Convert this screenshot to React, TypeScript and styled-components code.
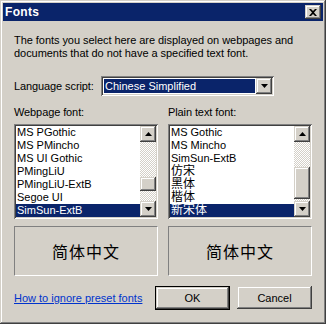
import React from 'react';
import styled, { createGlobalStyle } from 'styled-components';

const GlobalStyle = createGlobalStyle`
  html, body {
    margin: 0;
    padding: 0;
    background: #d4d0c8;
  }
  body {
    font-family: 'Liberation Sans', Arial, sans-serif;
    font-size: 11px;
    color: #000;
  }
`;

const raised = `
  box-shadow: inset -1px -1px #404040, inset 1px 1px #d4d0c8,
    inset -2px -2px #808080, inset 2px 2px #ffffff;
`;

const sunken = `
  box-shadow: inset 1px 1px #808080, inset -1px -1px #ffffff,
    inset 2px 2px #404040, inset -2px -2px #d4d0c8;
`;

const webFonts = [
  'MS PGothic',
  'MS PMincho',
  'MS UI Gothic',
  'PMingLiU',
  'PMingLiU-ExtB',
  'Segoe UI',
  'SimSun-ExtB'
];

const plainFonts = ['MS Gothic', 'MS Mincho', 'SimSun-ExtB', '仿宋', '黑体', '楷体', '新宋体'];

function ArrowGlyph({ up }: { up?: boolean }) {
  return (
    <svg width="7" height="4" viewBox="0 0 7 4">
      {up ? <path d="M3.5 0 L7 4 L0 4 Z" fill="#000" /> : <path d="M0 0 L7 0 L3.5 4 Z" fill="#000" />}
    </svg>
  );
}

function FontList({ items, thumbTop, thumbHeight }: { items: string[]; thumbTop: number; thumbHeight: number }) {
  return (
    <ListBox>
      <ListItems>
        {items.map((name, index) => (
          <ListRow key={name} selected={index === items.length - 1} cjk={/[^\x00-\x7f]/.test(name)}>
            {name}
          </ListRow>
        ))}
      </ListItems>
      <ScrollBar>
        <ScrollButton>
          <ArrowGlyph up />
        </ScrollButton>
        <Track>
          <Thumb style={{ marginTop: thumbTop, height: thumbHeight }} />
        </Track>
        <ScrollButton>
          <ArrowGlyph />
        </ScrollButton>
      </ScrollBar>
    </ListBox>
  );
}

export default function App() {
  return (
    <>
      <GlobalStyle />
      <Window>
        <TitleBar>
          <Title>Fonts</Title>
          <CloseButton>
            <svg width="8" height="7" viewBox="0 0 8 7">
              <path d="M0 0 L2 0 L4 2 L6 0 L8 0 L5 3.5 L8 7 L6 7 L4 5 L2 7 L0 7 L3 3.5 Z" fill="#000" />
            </svg>
          </CloseButton>
        </TitleBar>
        <Body>
          <Intro>
            The fonts you select here are displayed on webpages and
            <br />
            documents that do not have a specified text font.
          </Intro>
          <ScriptRow>
            <Label>Language script:</Label>
            <Select>
              <SelectValue>Chinese Simplified</SelectValue>
              <DropButton>
                <ArrowGlyph />
              </DropButton>
            </Select>
          </ScriptRow>
          <Columns>
            <Column>
              <Label>Webpage font:</Label>
              <FontList items={webFonts} thumbTop={35} thumbHeight={14} />
              <Preview>简体中文</Preview>
            </Column>
            <Column>
              <Label>Plain text font:</Label>
              <FontList items={plainFonts} thumbTop={25} thumbHeight={32} />
              <Preview>简体中文</Preview>
            </Column>
          </Columns>
          <Footer>
            <HelpLink href="#">How to ignore preset fonts</HelpLink>
            <Buttons>
              <DefaultButton>
                <Button>OK</Button>
              </DefaultButton>
              <Button>Cancel</Button>
            </Buttons>
          </Footer>
        </Body>
      </Window>
    </>
  );
}

const Window = styled.div`
  width: 326px;
  height: 324px;
  box-sizing: border-box;
  padding: 3px;
  background: #d4d0c8;
  display: flex;
  flex-direction: column;
  box-shadow: inset -1px -1px #404040, inset 1px 1px #d4d0c8,
    inset -2px -2px #808080, inset 2px 2px #ffffff;
`;

const TitleBar = styled.div`
  height: 18px;
  background: #0a246a;
  display: flex;
  align-items: center;
  justify-content: space-between;
  padding: 0 2px 0 2px;
`;

const Title = styled.span`
  color: #fff;
  font-weight: bold;
  font-size: 12px;
  letter-spacing: 0.3px;
`;

const CloseButton = styled.div`
  width: 16px;
  height: 14px;
  background: #d4d0c8;
  display: flex;
  align-items: center;
  justify-content: center;
  ${raised}
`;

const Body = styled.div`
  padding: 0 11px;
  display: flex;
  flex-direction: column;
`;

const Intro = styled.p`
  margin: 13px 0 0;
  line-height: 13px;
  letter-spacing: -0.05px;
`;

const ScriptRow = styled.div`
  display: flex;
  align-items: center;
  margin-top: 16px;
  height: 20px;
`;

const Label = styled.div`
  line-height: 13px;
  width: 87px;
  white-space: nowrap;
  letter-spacing: -0.1px;
`;

const Select = styled.div`
  width: 173px;
  height: 20px;
  box-sizing: border-box;
  padding: 2px;
  background: #fff;
  display: flex;
  align-items: stretch;
  ${sunken}
`;

const SelectValue = styled.div`
  flex: 1;
  margin: 1px;
  padding-left: 1px;
  background: #0a246a;
  color: #fff;
  font-size: 11px;
  line-height: 14px;
`;

const DropButton = styled.div`
  width: 16px;
  background: #d4d0c8;
  display: flex;
  align-items: center;
  justify-content: center;
  ${raised}
`;

const Columns = styled.div`
  display: grid;
  grid-template-columns: 144px 144px;
  column-gap: 10px;
  margin-top: 10px;
`;

const Column = styled.div`
  display: flex;
  flex-direction: column;
`;

const ListBox = styled.div`
  margin-top: 5px;
  height: 95px;
  box-sizing: border-box;
  padding: 2px;
  background: #fff;
  display: flex;
  ${sunken}
`;

const ListItems = styled.div`
  flex: 1;
  display: flex;
  flex-direction: column;
  overflow: hidden;
`;

const ListRow = styled.div<{ selected?: boolean; cjk?: boolean }>`
  height: 13px;
  line-height: 13px;
  padding-left: 1px;
  font-size: ${(p) => (p.cjk ? '12px' : '11px')};
  font-family: 'Liberation Sans', 'Noto Sans CJK SC', sans-serif;
  white-space: nowrap;
  background: ${(p) => (p.selected ? '#0a246a' : 'transparent')};
  color: ${(p) => (p.selected ? '#fff' : '#000')};
`;

const ScrollBar = styled.div`
  width: 16px;
  display: flex;
  flex-direction: column;
`;

const ScrollButton = styled.div`
  height: 16px;
  background: #d4d0c8;
  display: flex;
  align-items: center;
  justify-content: center;
  ${raised}
`;

const Track = styled.div`
  flex: 1;
  background-image: conic-gradient(#d4d0c8 25%, #fff 0 50%, #d4d0c8 0 75%, #fff 0);
  background-size: 2px 2px;
`;

const Thumb = styled.div`
  background: #d4d0c8;
  ${raised}
`;

const Preview = styled.div`
  margin-top: 7px;
  height: 50px;
  box-sizing: border-box;
  border: 1px solid;
  border-color: #808080 #fff #fff #808080;
  display: flex;
  align-items: center;
  justify-content: center;
  font-family: 'Noto Sans CJK SC', sans-serif;
  font-size: 16px;
  letter-spacing: 1px;
`;

const Footer = styled.div`
  display: flex;
  align-items: center;
  justify-content: space-between;
  margin-top: 10px;
`;

const HelpLink = styled.a`
  color: #0033cc;
  text-decoration: underline;
`;

const Buttons = styled.div`
  display: flex;
  gap: 7px;
`;

const DefaultButton = styled.div`
  border: 1px solid #000;
  display: flex;
`;

const Button = styled.div`
  width: 75px;
  height: 23px;
  box-sizing: border-box;
  display: flex;
  align-items: center;
  justify-content: center;
  background: #d4d0c8;
  font-size: 11px;
  ${raised}
  ${DefaultButton} & {
    width: 73px;
    height: 22px;
  }
`;
